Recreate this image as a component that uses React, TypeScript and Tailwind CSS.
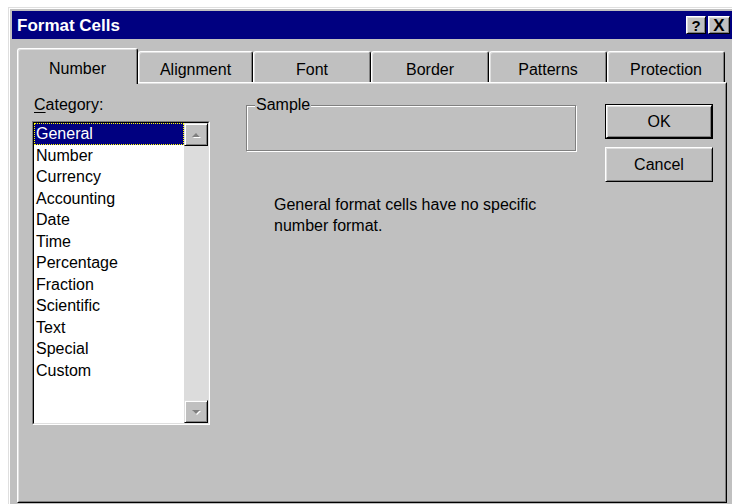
import React from "react";

const categories = [
  "General",
  "Number",
  "Currency",
  "Accounting",
  "Date",
  "Time",
  "Percentage",
  "Fraction",
  "Scientific",
  "Text",
  "Special",
  "Custom",
];

const tabs = [
  { label: "Number", width: "w-[121px]", active: true },
  { label: "Alignment", width: "w-[115px]", active: false },
  { label: "Font", width: "w-[118px]", active: false },
  { label: "Border", width: "w-[118px]", active: false },
  { label: "Patterns", width: "w-[118px]", active: false },
  { label: "Protection", width: "w-[118px]", active: false },
];

function Arrow({ up }: { up: boolean }) {
  // Greyed-out (disabled) scroll arrow with its white emboss
  return (
    <svg width="11" height="8" viewBox="0 0 11 8" className="block">
      {up ? (
        <>
          <path d="M2 7 L6 3 L10 7 Z" fill="#ffffff" />
          <path d="M1 6 L5 2 L9 6 Z" fill="#808080" />
        </>
      ) : (
        <>
          <path d="M2 3 L10 3 L6 7 Z" fill="#ffffff" />
          <path d="M1 2 L9 2 L5 6 Z" fill="#808080" />
        </>
      )}
    </svg>
  );
}

function ScrollButton({ up }: { up: boolean }) {
  return (
    <div className="h-[23px] w-[24px] border-t border-l border-[#dfdfdf] border-r border-b border-r-black border-b-black bg-[#c0c0c0] shadow-[inset_1px_1px_0_#ffffff,inset_-1px_-1px_0_#808080] flex items-center justify-center">
      <Arrow up={up} />
    </div>
  );
}

function TitleButton({ children, width }: { children: React.ReactNode; width: string }) {
  return (
    <div
      className={`${width} h-[18px] border-t border-l border-white border-r border-b border-r-black border-b-black bg-[#c0c0c0] shadow-[inset_1px_1px_0_#dfdfdf,inset_-1px_-1px_0_#808080] flex items-center justify-center text-[15px] font-bold leading-none text-black`}
    >
      {children}
    </div>
  );
}

export default function App() {
  return (
    <div className="w-[732px] h-[504px] overflow-hidden bg-white font-['Liberation_Sans',Arial,sans-serif] text-[16px] text-black">
      {/* dialog window frame */}
      <div className="ml-[8px] mt-[7px] w-[728px] h-[512px] border-t border-l border-[#dfdfdf] border-r border-b border-r-black border-b-black bg-[#c0c0c0]">
        <div className="h-full border-t border-l border-white border-r border-b border-r-[#808080] border-b-[#808080] p-[2px]">
          {/* title bar */}
          <div className="h-[28px] bg-[#000080] flex items-center pl-[5px] pr-[2px]">
            <span className="text-white font-bold text-[17px] leading-none">Format Cells</span>
            <div className="flex-1" />
            <div className="flex items-center gap-[2px]">
              <TitleButton width="w-[20px]">?</TitleButton>
              <TitleButton width="w-[22px]">
                <span className="text-[17px]">X</span>
              </TitleButton>
            </div>
          </div>

          {/* body */}
          <div className="px-[5px] pt-[9px]">
            {/* tab strip */}
            <div className="flex items-end h-[36px] -mb-[2px] relative z-10">
              {tabs.map((t) =>
                t.active ? (
                  <div
                    key={t.label}
                    className={`${t.width} h-[36px] bg-[#c0c0c0] rounded-t-[3px] border-t border-l border-white border-r border-r-black shadow-[inset_1px_1px_0_#dfdfdf,inset_-1px_0_0_#808080] flex justify-center pt-[10px] leading-[20px]`}
                  >
                    {t.label}
                  </div>
                ) : (
                  <div
                    key={t.label}
                    className={`${t.width} h-[31px] mb-[2px] bg-[#c0c0c0] rounded-t-[3px] border-t border-l border-white border-r border-r-black shadow-[inset_1px_1px_0_#dfdfdf,inset_-1px_0_0_#808080] flex justify-center pt-[8px] leading-[20px]`}
                  >
                    {t.label}
                  </div>
                )
              )}
            </div>

            {/* tab page */}
            <div className="h-[421px] border-t border-l border-white border-r border-b border-r-black border-b-black">
              <div className="h-full border-t border-l border-[#dfdfdf] border-r border-b border-r-[#808080] border-b-[#808080] flex">
                {/* category list */}
                <div className="ml-[13px] mt-[11px] w-[178px]">
                  <div className="pl-[2px] leading-[20px]">
                    <span className="underline underline-offset-2">C</span>ategory:
                  </div>
                  <div className="mt-[6px] h-[304px] border-t border-l border-[#808080] border-r border-b border-r-white border-b-white">
                    <div className="h-full border-t border-l border-black border-r border-b border-r-[#dfdfdf] border-b-[#dfdfdf] bg-white flex">
                      <div className="flex-1">
                        {categories.map((c, i) =>
                          i === 0 ? (
                            <div
                              key={c}
                              className="h-[21.5px] leading-[19.5px] bg-[#000080] text-white border border-dotted border-[#ffff00] pl-[1px]"
                            >
                              {c}
                            </div>
                          ) : (
                            <div key={c} className="h-[21.5px] leading-[21.5px] pl-[2px]">
                              {c}
                            </div>
                          )
                        )}
                      </div>
                      {/* vertical scroll bar */}
                      <div className="w-[24px] flex flex-col bg-[#dcdcdc]">
                        <ScrollButton up />
                        <div className="flex-1" />
                        <ScrollButton up={false} />
                      </div>
                    </div>
                  </div>
                </div>

                {/* sample + description */}
                <div className="ml-[36px] mt-[12px] w-[331px]">
                  <fieldset className="w-[330px] border border-[#808080] shadow-[inset_1px_1px_0_#ffffff,1px_1px_0_#ffffff]">
                    <legend className="ml-[8px] px-[1px] leading-[18px] bg-[#c0c0c0]">Sample</legend>
                    <div className="h-[36px]" />
                  </fieldset>
                  <p className="mt-[43px] ml-[28px] w-[280px] leading-[21px]">
                    General format cells have no specific number format.
                  </p>
                </div>

                <div className="flex-1" />

                {/* dialog buttons */}
                <div className="mt-[20px] mr-[12px] w-[108px] flex flex-col gap-[8px]">
                  <div className="h-[35px] border border-black">
                    <div className="h-full border-t border-l border-white border-r border-b border-r-black border-b-black shadow-[inset_1px_1px_0_#dfdfdf,inset_-1px_-1px_0_#808080] flex items-center justify-center">
                      OK
                    </div>
                  </div>
                  <div className="h-[35px] border-t border-l border-white border-r border-b border-r-black border-b-black shadow-[inset_1px_1px_0_#dfdfdf,inset_-1px_-1px_0_#808080] flex items-center justify-center">
                    Cancel
                  </div>
                </div>
              </div>
            </div>
          </div>
        </div>
      </div>
    </div>
  );
}
